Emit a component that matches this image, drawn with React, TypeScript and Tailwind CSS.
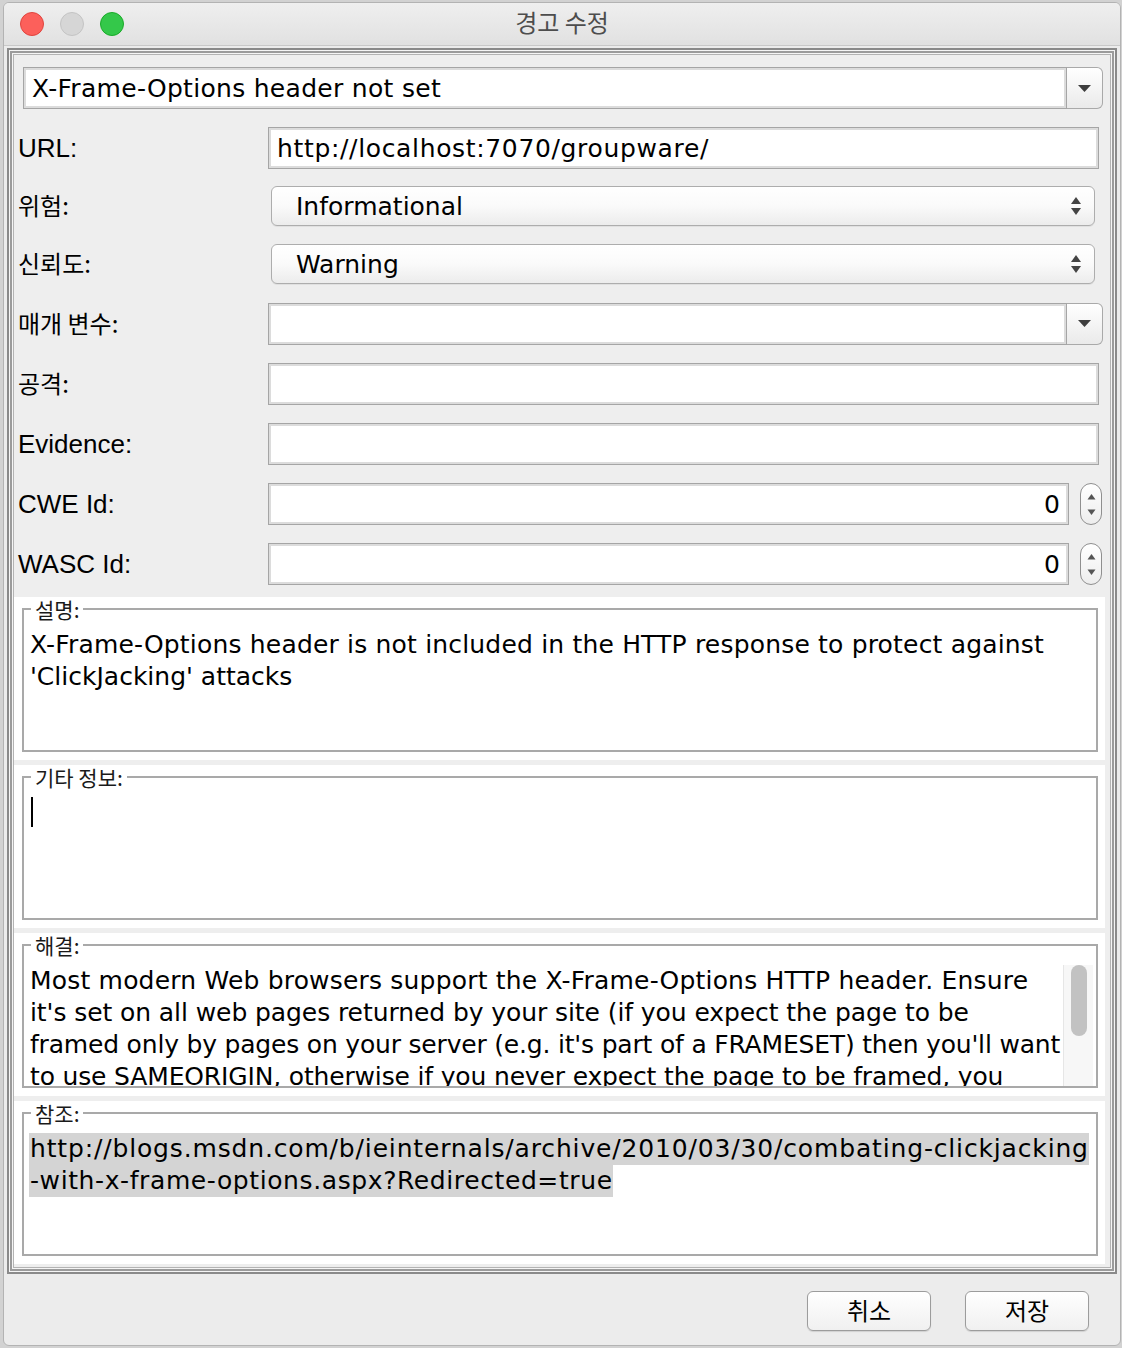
import React from "react";

const latin = "font-['DejaVu_Sans','Noto_Sans_CJK_KR',sans-serif]";
const korean = "font-['Noto_Sans_CJK_KR',sans-serif]";

function DownArrow() {
  return (
    <svg width="13" height="7" viewBox="0 0 13 7">
      <path d="M0 0 H13 L6.5 7 Z" fill="#3d3d3d" />
    </svg>
  );
}

function UpDownArrows({ small }: { small?: boolean }) {
  return small ? (
    <svg width="9" height="21" viewBox="0 0 9 21">
      <path d="M0.5 5.5 L4.5 0 L8.5 5.5 Z" fill="#555555" />
      <path d="M0.5 15.5 L4.5 21 L8.5 15.5 Z" fill="#555555" />
    </svg>
  ) : (
    <svg width="10" height="18" viewBox="0 0 10 18">
      <path d="M0 7 L5 0 L10 7 Z" fill="#444444" />
      <path d="M0 11 L5 18 L10 11 Z" fill="#444444" />
    </svg>
  );
}

function TextField({ value, right, track }: { value?: string; right?: boolean; track?: string }) {
  return (
    <div
      className={`flex h-[42px] min-w-0 flex-1 items-center border border-[#a5a5a5] bg-white px-[8px] shadow-[inset_0_0_0_2px_#dcdcdc] ${latin} text-[25px] text-black ${
        right ? "justify-end" : ""
      }`}
    >
      <span className={`whitespace-nowrap leading-none ${track ?? ""}`}>{value}</span>
    </div>
  );
}

function ComboBox({ value, track }: { value?: string; track?: string }) {
  return (
    <div className="flex h-[42px] min-w-0 flex-1">
      <TextField value={value} track={track} />
      <div className="flex w-[36px] items-center justify-center rounded-r-[6px] border border-l-0 border-[#a9a9a9] bg-gradient-to-b from-white to-[#eaeaea]">
        <DownArrow />
      </div>
    </div>
  );
}

function Select({ value }: { value: string }) {
  return (
    <div
      className={`ml-[3px] mr-[4px] flex h-[40px] min-w-0 flex-1 items-center justify-between rounded-[6px] border border-[#adadad] bg-gradient-to-b from-white via-[#fafafa] to-[#ececec] pl-[24px] pr-[13px] shadow-[0_1px_0_rgba(0,0,0,0.06)] ${latin} text-[25px] text-black`}
    >
      <span className="leading-none">{value}</span>
      <UpDownArrows />
    </div>
  );
}

function Spinner() {
  return (
    <div className="ml-[11px] flex h-[42px] w-[22px] flex-col items-center justify-center rounded-[11px] border border-[#8f8f8f] bg-gradient-to-b from-white to-[#ededed]">
      <UpDownArrows small />
    </div>
  );
}

function Label({ text, kr }: { text: string; kr?: boolean }) {
  return (
    <div
      className={`w-[250px] shrink-0 text-black ${
        kr
          ? `${korean} pb-[2px] text-[24px]`
          : "font-['Liberation_Sans','Noto_Sans_CJK_KR',sans-serif] text-[26px]"
      }`}
    >
      {text}
    </div>
  );
}

function Section({ title, children }: { title: string; children?: React.ReactNode }) {
  return (
    <div className="h-[163px] bg-white pb-[8px] pl-[8px] pr-[7px] pt-px">
      <fieldset className="h-[154px] min-w-0 border-2 border-[#a9a9a9] px-[6px] pt-[9px]">
        <legend className={`ml-px px-[4px] ${korean} text-[21px] leading-[22px] text-[#1a1a1a]`}>
          {title}
        </legend>
        {children}
      </fieldset>
    </div>
  );
}

const lineCls = `whitespace-nowrap ${latin} text-[25px] leading-[32px] text-black`;

export default function App() {
  return (
    <div className="min-h-[1348px] w-[1122px] bg-[#d2d2d2] pl-[3px] pt-[2px]">
      <div className="flex w-[1118px] flex-col overflow-hidden rounded-[6px] border border-[#b3b3b3] bg-[#ececec]">
        {/* title bar */}
        <div className="relative flex h-[43px] items-center border-b border-[#c9c9c9] bg-gradient-to-b from-[#efefef] to-[#e1e1e1]">
          <div className="flex gap-[16px] pl-[16px]">
            <span className="h-[24px] w-[24px] rounded-full border border-[#e0443e] bg-[#fc605b]" />
            <span className="h-[24px] w-[24px] rounded-full border border-[#c4c4c4] bg-[#d6d6d6]" />
            <span className="h-[24px] w-[24px] rounded-full border border-[#1aab29] bg-[#34c84a]" />
          </div>
          <div
            className={`absolute inset-0 flex items-center justify-center pb-[4px] ${korean} text-[24px] text-[#4d4d4d]`}
          >
            경고 수정
          </div>
        </div>

        {/* framed panel */}
        <div className="mx-[3px] mt-[2px] border-2 border-[#8a8a8a] bg-[#f5f5f5] p-px">
          <div className="border-2 border-[#9b9b9b] bg-[#f5f5f5] p-px">
            <div className="border border-[#b3b3b3] bg-[#eeeeee] pb-[3px] pt-[12px]">
              <div className="flex pl-[9px] pr-[7px]">
                <ComboBox value="X-Frame-Options header not set" track="tracking-[0.3px]" />
              </div>

              <div className="mt-[10px] flex flex-col">
                <div className="flex h-[58px] items-center pl-[4px] pr-[11px]">
                  <Label text="URL:" />
                  <TextField value="http://localhost:7070/groupware/" track="tracking-[0.65px]" />
                </div>
                <div className="flex h-[58px] items-center pl-[4px] pr-[11px]">
                  <Label text="위험:" kr />
                  <Select value="Informational" />
                </div>
                <div className="flex h-[58px] items-center pl-[4px] pr-[11px]">
                  <Label text="신뢰도:" kr />
                  <Select value="Warning" />
                </div>
                <div className="flex h-[61px] items-center pl-[4px] pr-[7px]">
                  <Label text="매개 변수:" kr />
                  <ComboBox />
                </div>
                <div className="flex h-[60px] items-center pl-[4px] pr-[11px]">
                  <Label text="공격:" kr />
                  <TextField />
                </div>
                <div className="flex h-[60px] items-center pl-[4px] pr-[11px]">
                  <Label text="Evidence:" />
                  <TextField />
                </div>
                <div className="flex h-[60px] items-center pl-[4px] pr-[8px]">
                  <Label text="CWE Id:" />
                  <TextField value="0" right />
                  <Spinner />
                </div>
                <div className="flex h-[60px] items-center pl-[4px] pr-[8px]">
                  <Label text="WASC Id:" />
                  <TextField value="0" right />
                  <Spinner />
                </div>
              </div>

              <div className="mt-[3px] flex flex-col gap-[5px] pr-[5px]">
                <Section title="설명:">
                  <div className={`${lineCls} tracking-[0.18px]`}>
                    X-Frame-Options header is not included in the HTTP response to protect against
                  </div>
                  <div className={lineCls}>'ClickJacking' attacks</div>
                </Section>

                <Section title="기타 정보:">
                  <div className="ml-px h-[30px] w-[2px] bg-black" />
                </Section>

                <Section title="해결:">
                  <div className="-mr-[3px] flex h-[121px]">
                    <div className="min-w-0 flex-1 overflow-hidden">
                      <div className={`${lineCls} tracking-[0.19px]`}>
                        Most modern Web browsers support the X-Frame-Options HTTP header. Ensure
                      </div>
                      <div className={`${lineCls} tracking-[-0.08px]`}>
                        it's set on all web pages returned by your site (if you expect the page to be
                      </div>
                      <div className={`${lineCls} tracking-[-0.19px]`}>
                        framed only by pages on your server (e.g. it's part of a FRAMESET) then you'll want
                      </div>
                      <div className={`${lineCls} tracking-[-0.16px]`}>
                        to use SAMEORIGIN, otherwise if you never expect the page to be framed, you
                      </div>
                    </div>
                    <div className="flex w-[30px] shrink-0 justify-center border-l border-[#e6e6e6] bg-[#f7f7f7]">
                      <div className="h-[71px] w-[16px] rounded-full bg-[#c2c2c2]" />
                    </div>
                  </div>
                </Section>

                <Section title="참조:">
                  <div className="-ml-px -mr-[5px]">
                    <div className={`${lineCls} tracking-[0.84px]`}>
                      <span className="inline-block h-[32px] bg-[#d4d4d4] pl-px">
                        http://blogs.msdn.com/b/ieinternals/archive/2010/03/30/combating-clickjacking
                      </span>
                    </div>
                    <div className={`${lineCls} tracking-[0.6px]`}>
                      <span className="inline-block h-[32px] bg-[#d4d4d4] pl-px">
                        -with-x-frame-options.aspx?Redirected=true
                      </span>
                    </div>
                  </div>
                </Section>
              </div>
            </div>
          </div>
        </div>

        {/* buttons */}
        <div className="flex justify-end gap-[34px] pb-[14px] pr-[31px] pt-[17px]">
          <button
            className={`h-[40px] w-[124px] rounded-[6px] border border-[#9c9c9c] bg-gradient-to-b from-white to-[#f0f0f0] pb-[4px] shadow-[0_1px_1px_rgba(0,0,0,0.12)] ${korean} text-[24px] text-black`}
          >
            취소
          </button>
          <button
            className={`h-[40px] w-[124px] rounded-[6px] border border-[#9c9c9c] bg-gradient-to-b from-white to-[#f0f0f0] pb-[4px] shadow-[0_1px_1px_rgba(0,0,0,0.12)] ${korean} text-[24px] text-black`}
          >
            저장
          </button>
        </div>
      </div>
    </div>
  );
}
